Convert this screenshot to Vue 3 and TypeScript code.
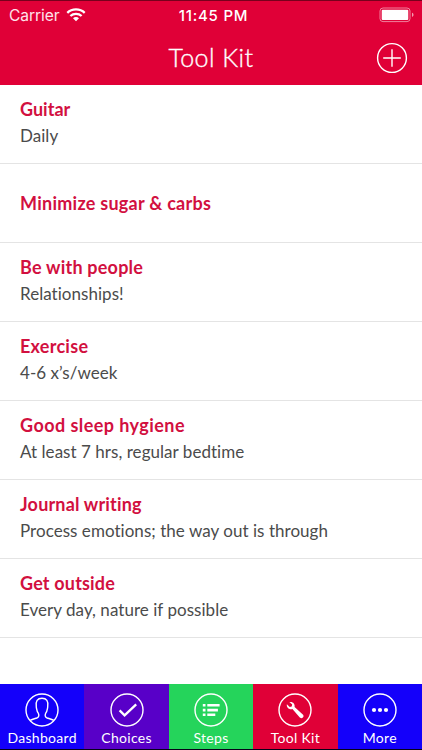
<script setup lang="ts">
interface Tool {
  title: string
  note?: string
  /** Letter spacing of the title, in px */
  tracking: number
}
interface Tab {
  id: string
  label: string
}

const tools: Tool[] = [
  { title: 'Guitar', note: 'Daily', tracking: 0.02 },
  { title: 'Minimize sugar & carbs', tracking: 0.26 },
  { title: 'Be with people', note: 'Relationships!', tracking: 0.22 },
  { title: 'Exercise', note: '4-6 x’s/week', tracking: 0.26 },
  { title: 'Good sleep hygiene', note: 'At least 7 hrs, regular bedtime', tracking: 0.44 },
  { title: 'Journal writing', note: 'Process emotions; the way out is through', tracking: 0.18 },
  { title: 'Get outside', note: 'Every day, nature if possible', tracking: 0.18 },
]

const tabs: Tab[] = [
  { id: 'dashboard', label: 'Dashboard' },
  { id: 'choices', label: 'Choices' },
  { id: 'steps', label: 'Steps' },
  { id: 'toolkit', label: 'Tool Kit' },
  { id: 'more', label: 'More' },
]
</script>

<template>
  <div class="screen">
    <header class="header">
      <div class="status">
        <div class="carrier">
          <span>Carrier</span>
          <svg class="wifi" width="20" height="14" viewBox="0 0 20 14" fill="none" stroke="#fff" stroke-width="2.3">
            <path d="M1.3 4.8C6 .3 14 .3 18.7 4.8" />
            <path d="M4.4 8C7.5 5.1 12.5 5.1 15.6 8" />
            <path d="M7 10.3C8.6 8.7 11.4 8.7 13 10.3L10 13.2Z" fill="#fff" stroke="none" />
          </svg>
        </div>
        <span class="clock">11:45 PM</span>
        <svg class="battery" width="36" height="16" viewBox="0 0 36 16">
          <rect x="1" y="1" width="30" height="13.6" rx="3" fill="none" stroke="#fff" stroke-opacity=".5" />
          <rect x="2.7" y="2.7" width="26.6" height="10.2" rx="1" fill="#fff" />
          <path d="M33 5.8C35 6.3 35 9.4 33 9.9Z" fill="#fff" fill-opacity=".6" />
        </svg>
      </div>
      <div class="navbar">
        <h1>Tool Kit</h1>
        <button class="add" aria-label="Add">
          <svg width="32" height="32" viewBox="0 0 32 32" fill="none" stroke="#fff" stroke-width="1.4">
            <circle cx="16" cy="16" r="14.4" />
            <path d="M7.2 16H24.8M16 7.2V24.8" />
          </svg>
        </button>
      </div>
    </header>

    <ul class="list">
      <li v-for="tool in tools" :key="tool.title" class="row" :class="{ single: !tool.note }">
        <span class="title" :style="{ letterSpacing: `${tool.tracking}px` }">{{ tool.title }}</span>
        <span v-if="tool.note" class="note">{{ tool.note }}</span>
      </li>
    </ul>

    <nav class="tabs">
      <a v-for="tab in tabs" :key="tab.id" class="tab" :class="tab.id">
        <svg width="36" height="36" viewBox="0 0 36 36" fill="none" stroke="#fff" stroke-width="1.4">
          <circle cx="18" cy="18" r="16" />
          <path
            v-if="tab.id === 'dashboard'"
            d="M6.2 28.4C8.4 27 10.6 26.7 12.8 26C15 25.2 15.2 23.4 14.4 21.4C12.9 19.6 12.7 17.4 12.3 15.2C11.2 9 13.6 6.2 18 6.2C22.4 6.2 24.8 9 23.7 15.2C23.3 17.4 23.1 19.6 21.6 21.4C20.8 23.4 21 25.2 23.2 26C25.4 26.7 27.6 27 29.8 28.4"
          />
          <path v-else-if="tab.id === 'choices'" d="M10.6 18.4L15.6 23.4L27.2 12.4" stroke-width="2.3" />
          <g v-else-if="tab.id === 'steps'" fill="#fff" stroke="none">
            <path d="M9.8 11.9h2.7v2.7H9.8zM14.3 11.9h12.3v2.7H14.3zM9.8 16.7h2.7v2.7H9.8zM14.3 16.7h10.6v2.7H14.3zM9.8 21.4h2.7v2.7H9.8zM14.3 21.4h8v2.7h-8z" />
          </g>
          <path
            v-else-if="tab.id === 'toolkit'"
            stroke="none"
            fill="#fff"
            d="M12.4 10.1C15.6 9.3 18.3 11.8 17.6 15.1L25.8 22.6C27.9 24.8 25 27.5 22.8 25.4L15.4 17.1C12.2 18 9.2 15.6 9.9 12.3L12.7 15L14.7 14.4L15.2 12.6Z"
          />
          <g v-else fill="#fff" stroke="none">
            <circle cx="12" cy="18" r="2.1" />
            <circle cx="18" cy="18" r="2.1" />
            <circle cx="24" cy="18" r="2.1" />
          </g>
        </svg>
        <span>{{ tab.label }}</span>
      </a>
    </nav>
  </div>
</template>

<style>
body {
  margin: 0;
  background: #fff;
}
</style>

<style scoped>
.screen {
  box-sizing: border-box;
  width: 422px;
  height: 750px;
  display: flex;
  flex-direction: column;
  overflow: hidden;
  background: #fff;
  border-bottom: 1px solid #050018;
  font-family: Lato, sans-serif;
  font-variant-ligatures: none;
}
.header {
  box-sizing: border-box;
  height: 85px;
  flex: none;
  background: #e00037;
  border-top: 1px solid #78001c;
  color: #fff;
}
.status {
  height: 28px;
  display: grid;
  grid-template-columns: 1fr auto 1fr;
  align-items: center;
  padding: 0 7px 0 9px;
  font-family: Inter, sans-serif;
  font-size: 16px;
}
.carrier {
  display: flex;
  align-items: center;
  gap: 7px;
  color: #ffe3ea;
  font-size: 15.6px;
  letter-spacing: -0.1px;
}
.clock {
  padding-left: 3px;
  font-size: 15px;
  font-weight: 500;
  letter-spacing: 0.75px;
}
.battery {
  justify-self: end;
}
.navbar {
  height: 57px;
  display: grid;
  grid-template-columns: 1fr auto 1fr;
  align-items: center;
  padding: 0 14px;
}
h1 {
  grid-column: 2;
  margin: -1px 0 0;
  font-size: 25px;
  font-weight: 300;
  line-height: 30px;
  letter-spacing: 0.45px;
  -webkit-text-stroke: 0.35px #fff;
}
.add {
  justify-self: end;
  display: flex;
  padding: 0;
  border: 0;
  background: none;
}
.list {
  flex: 1;
  margin: 0;
  padding: 0;
  list-style: none;
}
.row {
  box-sizing: border-box;
  height: 79px;
  display: flex;
  flex-direction: column;
  justify-content: center;
  gap: 3px;
  padding: 0 20px 4px;
  border-bottom: 1px solid #e4e4e4;
}
.row.single {
  padding-bottom: 0;
}
.title {
  color: #d2103f;
  font-size: 18px;
  font-weight: 700;
  line-height: 24px;
}
.note {
  color: #4b4b4b;
  font-size: 17px;
  line-height: 24px;
  letter-spacing: 0.04px;
}
.tabs {
  height: 65px;
  flex: none;
  display: grid;
  grid-template-columns: repeat(5, 1fr);
}
.tab {
  display: flex;
  flex-direction: column;
  align-items: center;
  gap: 1px;
  padding-top: 8px;
  color: #fff;
  font-size: 14px;
  line-height: 18px;
  letter-spacing: 0.3px;
}
.dashboard,
.more {
  background: #1400fa;
}
.choices {
  background: #5800c8;
}
.steps {
  background: #25d45b;
}
.toolkit {
  background: #e00037;
}
</style>
